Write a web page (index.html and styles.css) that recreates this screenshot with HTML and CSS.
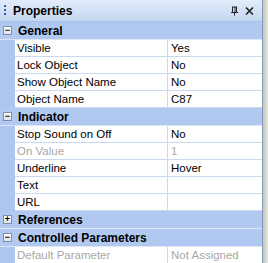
FILE: index.html
```html
<!DOCTYPE html>
<html lang="en">
<head>
  <meta charset="UTF-8">
  <title>Properties</title>
  <link rel="stylesheet" href="styles.css">
</head>
<body>
  <div class="frame">
    <div class="panel">
      <div class="titlebar">
        <span class="grip"></span>
        <span class="title">Properties</span>
        <span class="tools">
          <svg width="9" height="10" viewBox="0 0 9 10"><path d="M2 1h5M2.5 1v5M6.5 1v5M5 1v5M1 6.5h7M4.5 6.5v3" stroke="#222" stroke-width="1" fill="none"/></svg>
          <svg width="9" height="8" viewBox="0 0 9 8"><path d="M1 0.5l7 7M8 0.5l-7 7" stroke="#222" stroke-width="1.6" fill="none"/></svg>
        </span>
      </div>
      <div class="grid">
        <div class="cat"><span class="box">&minus;</span>General</div>
        <div class="row"><span class="name">Visible</span><span class="val">Yes</span></div>
        <div class="row"><span class="name">Lock Object</span><span class="val">No</span></div>
        <div class="row"><span class="name">Show Object Name</span><span class="val">No</span></div>
        <div class="row"><span class="name">Object Name</span><span class="val">C87</span></div>
        <div class="cat"><span class="box">&minus;</span>Indicator</div>
        <div class="row"><span class="name">Stop Sound on Off</span><span class="val">No</span></div>
        <div class="row dim"><span class="name">On Value</span><span class="val">1</span></div>
        <div class="row"><span class="name">Underline</span><span class="val">Hover</span></div>
        <div class="row"><span class="name">Text</span><span class="val"></span></div>
        <div class="row"><span class="name">URL</span><span class="val"></span></div>
        <div class="cat"><span class="box">+</span>References</div>
        <div class="cat"><span class="box">&minus;</span>Controlled Parameters</div>
        <div class="row dim"><span class="name">Default Parameter</span><span class="val">Not Assigned</span></div>
      </div>
    </div>
    <div class="edge"></div>
  </div>
</body>
</html>
```

FILE: styles.css
```css
body {
  margin: 0;
  font-family: "Liberation Sans", Arial, sans-serif;
  font-size: 11.5px;
  color: #000;
  background: #fff;
}
.frame {
  display: flex;
  width: 268px;
  height: 263px;
  overflow: hidden;
}
.panel {
  width: 262px;
  border-right: 1px solid #7f9db9;
}
.edge {
  flex: 1;
  background: linear-gradient(to right, #c8c4bc, #e8e6e0);
}
.titlebar {
  display: flex;
  align-items: center;
  height: 22px;
  background: linear-gradient(#e3ecfa, #c4d6f2);
  border-bottom: 1px solid #a8c0e8;
  box-sizing: border-box;
}
.grip {
  width: 2px;
  height: 12px;
  margin: 0 7px 0 4px;
  background: repeating-linear-gradient(#3a5a9a 0 2px, transparent 2px 4px);
}
.title {
  font-weight: bold;
  font-size: 12px;
  flex: 1;
}
.tools {
  display: flex;
  align-items: center;
  gap: 6px;
  margin-right: 8px;
}
.grid {
  background: #adc6ef;
}
.cat {
  display: flex;
  align-items: center;
  height: 17px;
  font-weight: bold;
  font-size: 12px;
  background: #b1c9f0;
  border-bottom: 1px solid #dce6f7;
}
.box {
  width: 7px;
  height: 7px;
  margin: 0 6px 0 3px;
  border: 1px solid #7e8fae;
  background: linear-gradient(#fff, #dde3ee);
  font-size: 9px;
  line-height: 7px;
  text-align: center;
  font-weight: bold;
}
.row {
  display: flex;
  height: 16px;
  margin-left: 15px;
  background: #fff;
  border-bottom: 1px solid #cbd9f0;
  line-height: 16px;
}
.name {
  width: 150px;
  padding-left: 2px;
  border-right: 1px solid #cbd9f0;
}
.val {
  flex: 1;
  padding-left: 3px;
}
.dim {
  color: #a8a8a8;
}
```
